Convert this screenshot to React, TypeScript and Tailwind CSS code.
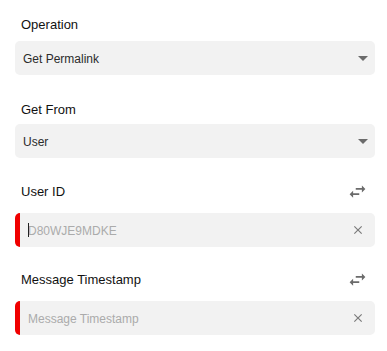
import React from 'react'

const font = { fontFamily: '"Liberation Sans", Arial, sans-serif' }

function Caret() {
  return (
    <svg width="10" height="5" viewBox="0 0 10 5" aria-hidden="true">
      <path d="M0 0h10L5 5z" fill="#6b6b6b" />
    </svg>
  )
}

function SwapIcon() {
  return (
    <svg width="21" height="21" viewBox="0 0 24 24" fill="#6b6b6b" aria-hidden="true">
      <path d="M6.99 11L3 15l3.99 4v-3H14v-2H6.99v-3zM21 9l-3.99-4v3H10v2h7.01v3L21 9z" />
    </svg>
  )
}

function CloseIcon() {
  return (
    <svg width="14" height="14" viewBox="0 0 24 24" fill="#7a7a7a" aria-hidden="true">
      <path d="M19 6.41L17.59 5 12 10.59 6.41 5 5 6.41 10.59 12 5 17.59 6.41 19 12 13.41 17.59 19 19 17.59 13.41 12z" />
    </svg>
  )
}

function SelectBox({ value }: { value: string }) {
  return (
    <div className="flex h-[34px] items-center justify-between rounded-[5px] bg-[#f2f2f2] pl-2 pr-[7px] text-[12px] text-[#2b2b2b]">
      <span className="pt-px">{value}</span>
      <Caret />
    </div>
  )
}

function InputBox({ placeholder, focused }: { placeholder: string; focused?: boolean }) {
  return (
    <div className="relative flex h-[34px] items-center rounded-[5px] border-l-[5px] border-[#f00000] bg-[#f2f2f2] pl-2 pr-[10px]">
      <input
        placeholder={placeholder}
        className="min-w-0 flex-1 bg-transparent pt-px text-[12px] text-[#2b2b2b] outline-none placeholder:text-[#ababab]"
        style={font}
      />
      {focused && <span className="pointer-events-none absolute left-2 top-[10px] h-[14px] w-px bg-[#222]" />}
      <CloseIcon />
    </div>
  )
}

export default function App() {
  return (
    <div className="w-[387px] bg-white pl-[15px] pr-[12px] pt-[13px] pb-4" style={font}>
      <div className="flex h-5 items-center pl-[6px] pt-[3px] text-[13px] text-[#111]">Operation</div>
      <div className="mt-2">
        <SelectBox value="Get Permalink" />
      </div>

      <div className="mt-[23px] flex h-5 items-center pl-[6px] pt-[3px] text-[13px] text-[#111]">Get From</div>
      <div className="mt-[6px]">
        <SelectBox value="User" />
      </div>

      <div className="mt-[20px] flex h-6 items-center justify-between pl-[6px] pr-[7px] pt-[3px] text-[13px] text-[#111]">
        <span>User ID</span>
        <SwapIcon />
      </div>
      <div className="mt-[11px]">
        <InputBox placeholder="D80WJE9MDKE" focused />
      </div>

      <div className="mt-[19px] flex h-6 items-center justify-between pl-[6px] pr-[7px] pt-[3px] text-[13px] text-[#111]">
        <span>Message Timestamp</span>
        <SwapIcon />
      </div>
      <div className="mt-[11px]">
        <InputBox placeholder="Message Timestamp" />
      </div>
    </div>
  )
}
